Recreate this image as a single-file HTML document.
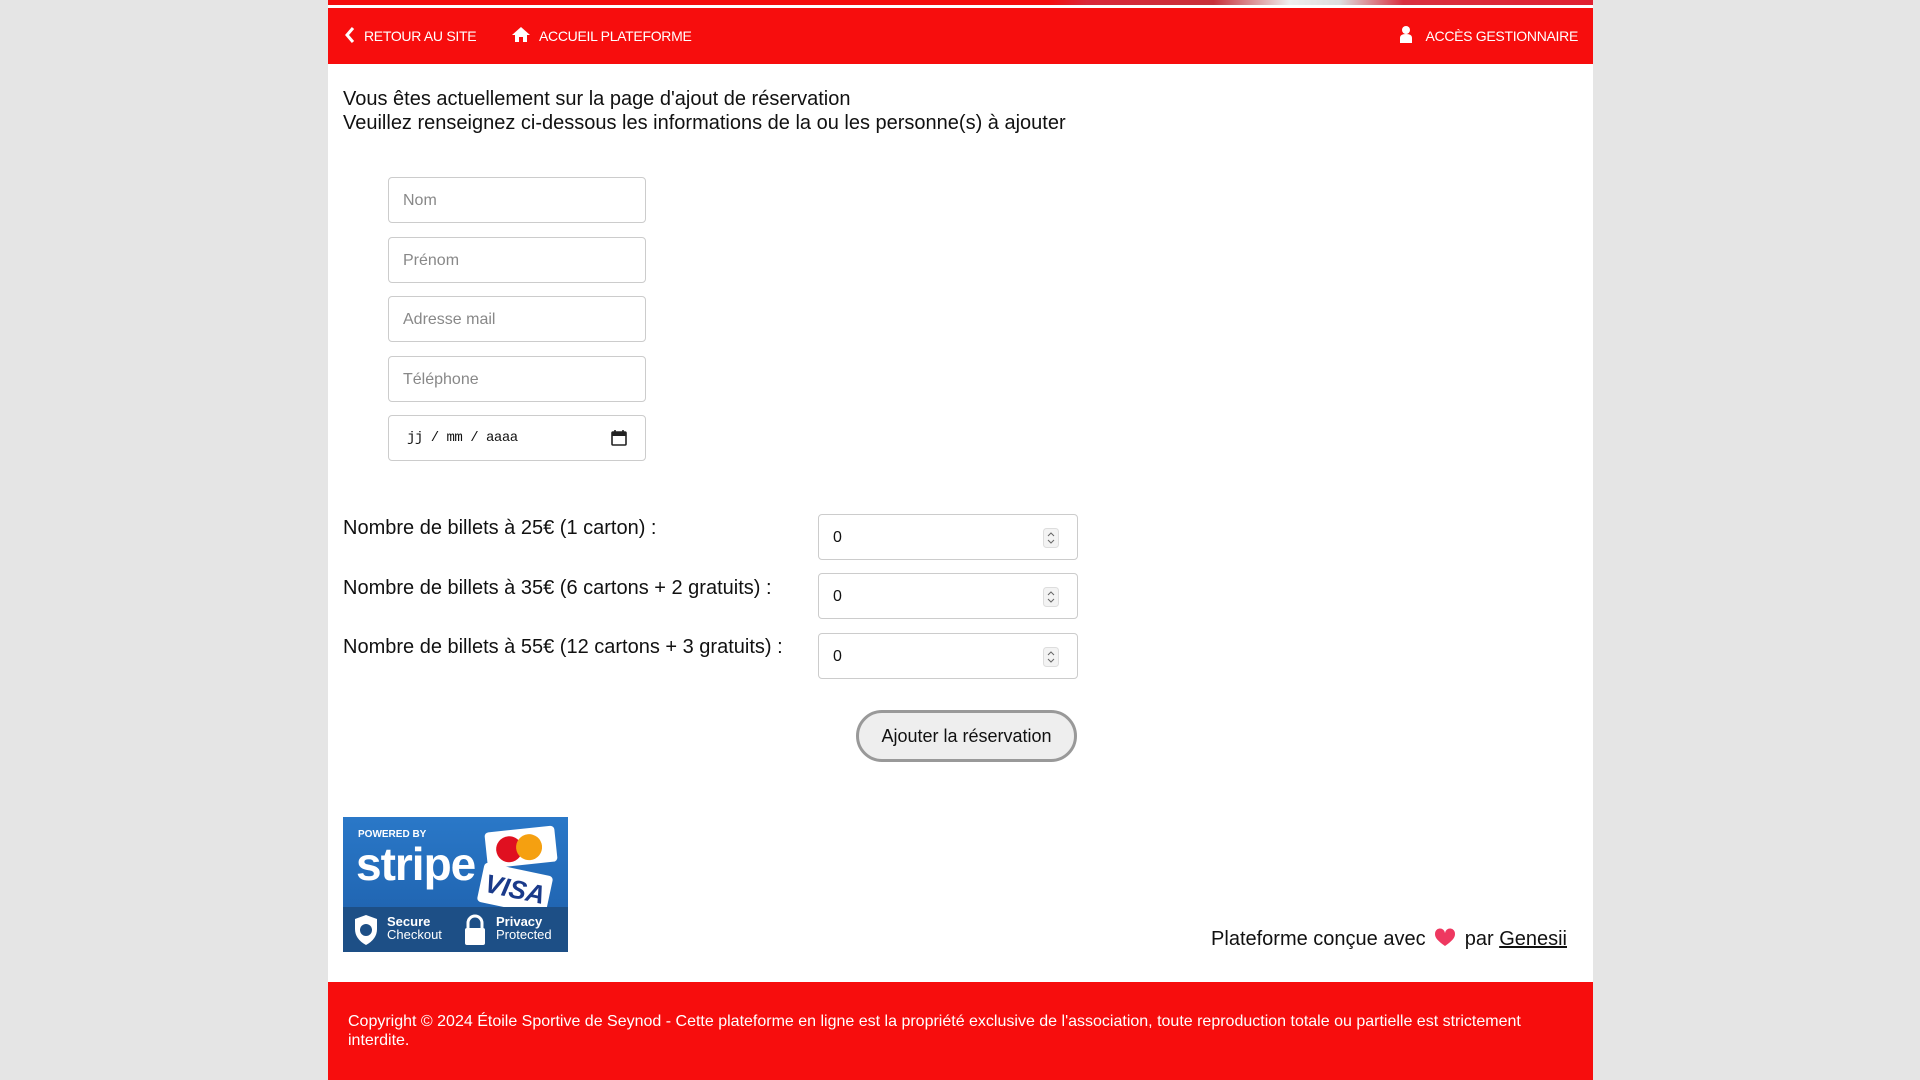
<!DOCTYPE html>
<html><head><meta charset="utf-8"><style>
*{box-sizing:border-box;margin:0;padding:0}
body{width:1920px;height:1080px;background:#e5e5e5;font-family:"Liberation Sans",sans-serif;overflow:hidden;position:relative}
.wrap{position:absolute;left:328px;top:0;width:1265px;height:1080px;background:#fff}
.banner{position:absolute;left:0;top:0;width:1265px;height:5px;background:linear-gradient(90deg,#f40d0d 0,#f40d0d 57%,#d9283a 60%,#c8303a 70%,#eee 76%,#ddd 80%,#d93040 85%,#e02030 100%)}
.nav{position:absolute;left:0;top:8px;width:1265px;height:56px;background:#f70d0d;color:#fff;font-size:14px}
.nav span{position:absolute;top:20px;letter-spacing:-0.3px}
.t{position:absolute;left:15px;font-size:20px;color:#111}
.in{position:absolute;left:60px;width:258px;height:46px;border:1px solid #ccc;border-radius:4px;font-size:16px;color:#888;padding:14px 14px}
.lab{position:absolute;left:15px;font-size:20px;color:#111}
.num{position:absolute;left:490px;width:260px;height:46px;border:1px solid #ccc;border-radius:4px;font-size:16px;color:#111;padding:14px 14px}
.num svg{position:absolute;right:18px;top:13px}
.btn{position:absolute;left:528px;top:710px;width:221px;height:52px;border:3px solid #999;border-radius:26px;background:#eee;font-size:18px;text-align:center;line-height:46px;color:#111}
.footer{position:absolute;left:0;top:982px;width:1265px;height:98px;background:#f70d0d;color:#fff;font-size:16px;padding:30px 20px;line-height:19px}
</style></head><body><div class="wrap">
<div class="banner"></div>
<div class="nav">
<svg style="position:absolute;left:16px;top:18px" width="12" height="18" viewBox="0 0 12 18"><path d="M9 2 3 9l6 7" stroke="#fff" stroke-width="3" fill="none"/></svg>
<span style="left:36px">RETOUR AU SITE</span>
<svg style="position:absolute;left:183px;top:18px" width="20" height="17" viewBox="0 0 20 17"><path d="M10 1 1 9h3v7h4v-5h4v5h4V9h3z" fill="#fff"/></svg>
<span style="left:211px">ACCUEIL PLATEFORME</span>
<svg style="position:absolute;left:1071px;top:17px" width="14" height="19" viewBox="0 0 14 19"><circle cx="7" cy="5" r="4" fill="#fff"/><path d="M1 18v-5q0-4 6-4t6 4v5z" fill="#fff"/></svg>
<span style="right:15px">ACCÈS GESTIONNAIRE</span>
</div>
<div class="t" style="top:88px">Vous êtes actuellement sur la page d'ajout de réservation</div>
<div class="t" style="top:112px">Veuillez renseignez ci-dessous les informations de la ou les personne(s) à ajouter</div>
<div class="in" style="top:177px">Nom</div>
<div class="in" style="top:237px">Prénom</div>
<div class="in" style="top:296px">Adresse mail</div>
<div class="in" style="top:356px">Téléphone</div>
<div class="in" style="top:415px;color:#111;font-family:'Liberation Mono',monospace;font-size:14px;padding-left:18px;letter-spacing:-0.5px">jj / mm / aaaa
<svg style="position:absolute;right:18px;top:13px" width="16" height="17" viewBox="0 0 16 17"><rect x="1" y="3" width="14" height="13" rx="1" fill="none" stroke="#222" stroke-width="1.6"/><rect x="1" y="3" width="14" height="4" fill="#222"/><path d="M4 1v3M12 1v3" stroke="#222" stroke-width="1.6"/></svg></div>
<div class="lab" style="top:517px">Nombre de billets à 25€ (1 carton) :</div>
<div class="lab" style="top:577px">Nombre de billets à 35€ (6 cartons + 2 gratuits) :</div>
<div class="lab" style="top:636px">Nombre de billets à 55€ (12 cartons + 3 gratuits) :</div>
<div class="num" style="top:514px">0<svg width="16" height="20" viewBox="0 0 16 20"><rect x=".5" y=".5" width="15" height="19" rx="3" fill="#f3f3f3" stroke="#ddd"/><path d="M5 8l3-3 3 3M5 12l3 3 3-3" stroke="#666" fill="none"/></svg></div>
<div class="num" style="top:573px">0<svg width="16" height="20" viewBox="0 0 16 20"><rect x=".5" y=".5" width="15" height="19" rx="3" fill="#f3f3f3" stroke="#ddd"/><path d="M5 8l3-3 3 3M5 12l3 3 3-3" stroke="#666" fill="none"/></svg></div>
<div class="num" style="top:633px">0<svg width="16" height="20" viewBox="0 0 16 20"><rect x=".5" y=".5" width="15" height="19" rx="3" fill="#f3f3f3" stroke="#ddd"/><path d="M5 8l3-3 3 3M5 12l3 3 3-3" stroke="#666" fill="none"/></svg></div>
<div class="btn">Ajouter la réservation</div>
<div style="position:absolute;left:15px;top:817px;width:225px;height:135px;background:linear-gradient(180deg,#2a78c8,#1c5da8);overflow:hidden;color:#fff;font-weight:bold">
<div style="position:absolute;left:15px;top:12px;font-size:10px">POWERED BY</div>
<div style="position:absolute;left:13px;top:20px;font-size:46px;letter-spacing:-1px">stripe</div>
<div style="position:absolute;left:143px;top:12px;width:70px;height:36px;background:#fff;border-radius:4px;transform:rotate(-6deg)"><div style="position:absolute;left:10px;top:6px;width:26px;height:26px;border-radius:50%;background:#e01020"></div><div style="position:absolute;left:30px;top:6px;width:26px;height:26px;border-radius:50%;background:#f5a010"></div></div>
<div style="position:absolute;left:137px;top:52px;width:70px;height:40px;background:#fff;border-radius:4px;transform:rotate(12deg);color:#1a3a8a;font-size:26px;font-style:italic;text-align:center;line-height:40px">VISA</div>
<div style="position:absolute;left:0;top:90px;width:225px;height:45px;background:#1d4f86"></div>
<div style="position:absolute;left:44px;top:98px;font-size:13px;line-height:13px">Secure<br><span style="font-weight:normal">Checkout</span></div>
<div style="position:absolute;left:153px;top:98px;font-size:13px;line-height:13px">Privacy<br><span style="font-weight:normal">Protected</span></div>
<svg style="position:absolute;left:10px;top:97px" width="26" height="32" viewBox="0 0 26 32"><path d="M13 1 24 5v10q0 10-11 16Q2 25 2 15V5z" fill="#fff"/><circle cx="13" cy="16" r="6" fill="#1d4f86"/></svg>
<svg style="position:absolute;left:120px;top:97px" width="24" height="32" viewBox="0 0 24 32"><path d="M5 14V9a7 7 0 0114 0v5" stroke="#fff" stroke-width="3" fill="none"/><rect x="2" y="14" width="20" height="17" rx="2" fill="#fff"/></svg>
</div>
<div style="position:absolute;right:26px;top:928px;font-size:20px;color:#111">Plateforme conçue avec <svg width="22" height="19" viewBox="0 0 22 19" style="vertical-align:-2px;margin:0 3px"><path d="M11 18C4 13 1 10 1 6a5 5 0 0110-1 5 5 0 0110 1c0 4-3 7-10 12z" fill="#ee3860"/></svg> par <u>Genesii</u></div>
<div class="footer" style="padding-right:40px">Copyright © 2024 Étoile Sportive de Seynod - Cette plateforme en ligne est la propriété exclusive de l'association, toute reproduction totale ou partielle est strictement interdite.</div>
</div></body></html>
